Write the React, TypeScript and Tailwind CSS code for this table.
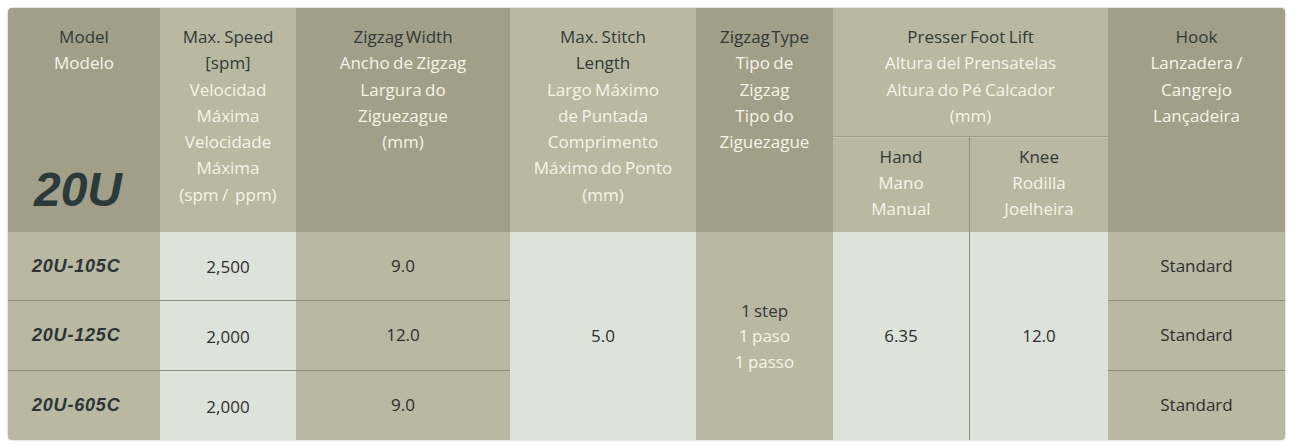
const DARK_HEAD = "bg-[#a19f87]";
const LIGHT_HEAD = "bg-[#b9b8a1]";
const BODY_MID = "bg-[#b9b8a2]";
const BODY_LIGHT = "bg-[#dee3d9]";

function Lines({ dark, light }: { dark: string[]; light: string[] }) {
  return (
    <>
      {dark.map((t) => (
        <div key={t} className="text-[#2f3b3b]">
          {t}
        </div>
      ))}
      {light.map((t) => (
        <div key={t} className="text-[#f6f4e9]">
          {t}
        </div>
      ))}
    </>
  );
}

const models = [
  { name: "20U-105C", speed: "2,500", width: "9.0" },
  { name: "20U-125C", speed: "2,000", width: "12.0" },
  { name: "20U-605C", speed: "2,000", width: "9.0" },
];

export default function App() {
  return (
    <div className="min-h-screen bg-white p-2">
      <div
        className="grid grid-cols-[152px_136px_214px_186px_137px_137px_138px_177px] grid-rows-[129px_95px_69px_70px_69px] w-[1277px] overflow-hidden rounded-[4px] shadow-[0_0_2px_rgba(0,0,0,0.35)] text-center text-[17px] font-medium leading-[26.3px] [word-spacing:-1px]"
        style={{ fontFamily: '"Open Sans", "Noto Sans", sans-serif' }}
      >
        {/* header */}
        <div className={`${DARK_HEAD} col-start-1 row-start-1 row-span-2 flex flex-col justify-between pt-4 pb-[18px]`}>
          <div>
            <Lines dark={["Model"]} light={["Modelo"]} />
          </div>
          <div
            className="text-[48px] leading-none font-bold italic text-[#2b3a3a] pr-3"
            style={{ fontFamily: '"Liberation Sans", Arial, sans-serif' }}
          >
            20U
          </div>
        </div>
        <div className={`${LIGHT_HEAD} col-start-2 row-start-1 row-span-2 pt-4`}>
          <Lines
            dark={["Max. Speed", "[spm]"]}
            light={["Velocidad", "Máxima", "Velocidade", "Máxima ", "(spm /\u00a0 ppm)"]}
          />
        </div>
        <div className={`${DARK_HEAD} col-start-3 row-start-1 row-span-2 pt-4`}>
          <div className="text-[#2f3b3b] [word-spacing:-2px]">Zigzag Width</div>
          <Lines dark={[]} light={["Ancho de Zigzag", "Largura do", "Ziguezague", "(mm)"]} />
        </div>
        <div className={`${LIGHT_HEAD} col-start-4 row-start-1 row-span-2 pt-4`}>
          <Lines
            dark={["Max. Stitch", "Length"]}
            light={["Largo Máximo", "de Puntada", "Comprimento", "Máximo do Ponto", "(mm)"]}
          />
        </div>
        <div className={`${DARK_HEAD} col-start-5 row-start-1 row-span-2 pt-4`}>
          <div className="text-[#2f3b3b] [word-spacing:-3px]">Zigzag Type</div>
          <Lines dark={[]} light={["Tipo de", "Zigzag", "Tipo do", "Ziguezague"]} />
        </div>
        <div className={`${LIGHT_HEAD} col-start-6 col-span-2 row-start-1 pt-4 border-b border-[#9c9b86]`}>
          <Lines
            dark={["Presser Foot Lift"]}
            light={["Altura del Prensatelas", "Altura do Pé Calcador", "(mm)"]}
          />
        </div>
        <div className={`${LIGHT_HEAD} col-start-6 row-start-2 pt-[7px] leading-[26px] border-r border-[#8f8e79] shadow-[inset_0_1px_0_#c6c5b0]`}>
          <Lines dark={["Hand"]} light={["Mano", "Manual"]} />
        </div>
        <div className={`${LIGHT_HEAD} col-start-7 row-start-2 pt-[7px] leading-[26px] shadow-[inset_0_1px_0_#c6c5b0]`}>
          <Lines dark={["Knee"]} light={["Rodilla", "Joelheira"]} />
        </div>
        <div className={`${DARK_HEAD} col-start-8 row-start-1 row-span-2 pt-4`}>
          <Lines dark={["Hook"]} light={["Lanzadera /", "Cangrejo", "Lançadeira"]} />
        </div>

        {/* body rows */}
        {models.map((m, i) => {
          const row = ["row-start-3", "row-start-4", "row-start-5"][i];
          const line = i < 2 ? "border-b border-[#8f8e7a]" : "";
          return (
            <div key={m.name} className="contents">
              <div
                className={`${BODY_MID} ${row} ${line} col-start-1 flex items-center pl-6 text-[18px] font-bold italic tracking-[0.8px] text-[#2b3535]`}
                style={{ fontFamily: '"Liberation Sans", Arial, sans-serif' }}
              >
                {m.name}
              </div>
              <div className={`${BODY_LIGHT} ${row} ${line} col-start-2 flex items-center justify-center pt-[3px] text-[#2b2f2f]`}>
                {m.speed}
              </div>
              <div className={`${BODY_MID} ${row} ${line} col-start-3 flex items-center justify-center text-[#2b2f2f]`}>
                {m.width}
              </div>
              <div className={`${BODY_MID} ${row} ${line} col-start-8 flex items-center justify-center text-[#2b2f2f]`}>
                Standard
              </div>
            </div>
          );
        })}
        <div className={`${BODY_LIGHT} col-start-4 row-start-3 row-span-3 flex items-center justify-center text-[#2b2f2f]`}>
          5.0
        </div>
        <div className={`${BODY_MID} col-start-5 row-start-3 row-span-3 flex flex-col items-center justify-center leading-[25.5px]`}>
          <Lines dark={["1 step"]} light={["1 paso", "1 passo"]} />
        </div>
        <div className={`${BODY_LIGHT} col-start-6 row-start-3 row-span-3 flex items-center justify-center border-r border-[#8f8e79] text-[#2b2f2f]`}>
          6.35
        </div>
        <div className={`${BODY_LIGHT} col-start-7 row-start-3 row-span-3 flex items-center justify-center text-[#2b2f2f]`}>
          12.0
        </div>
      </div>
    </div>
  );
}
